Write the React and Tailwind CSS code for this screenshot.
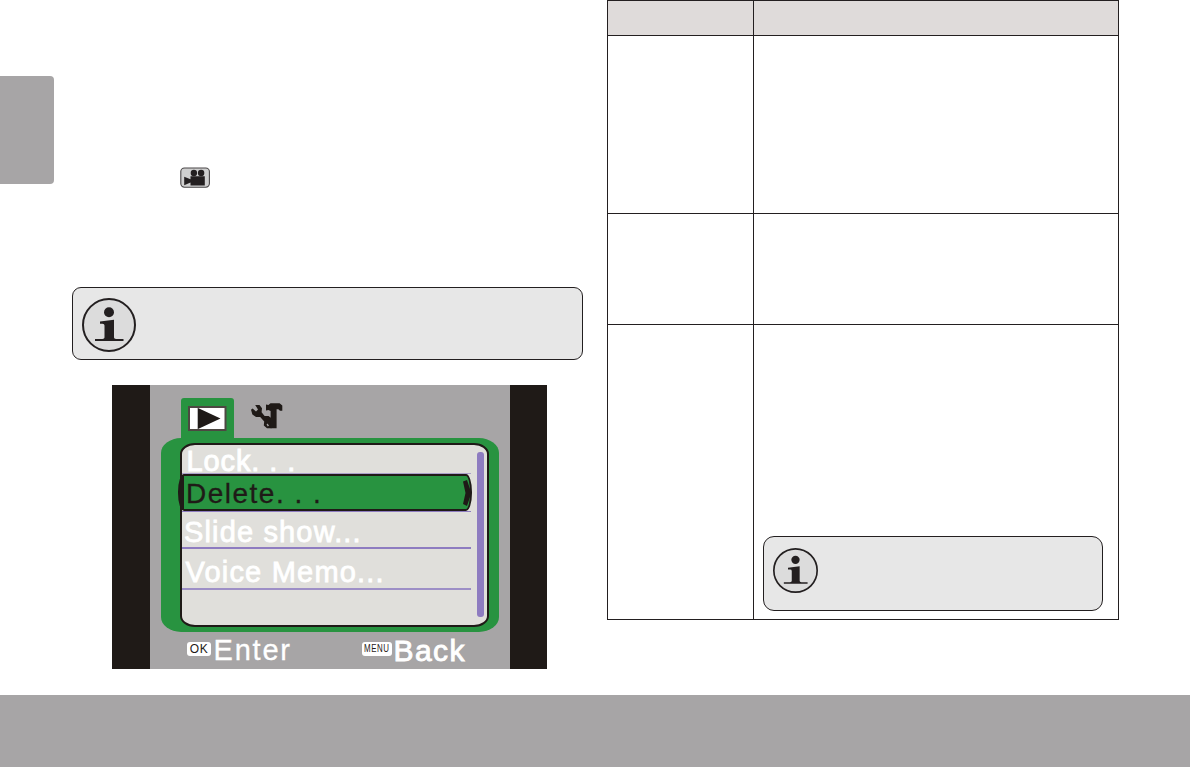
import clsx from 'clsx';

const tableRows = [
  { key: 'header', className: 'h-[35px] bg-[#dfdbda]' },
  { key: 'first', className: 'h-[178px]' },
  { key: 'second', className: 'h-[111px]' },
  { key: 'third', className: 'h-[295px]', note: true },
];

function InfoIcon({ className }) {
  return (
    <svg viewBox="0 0 54 54" className={clsx('shrink-0', className)}>
      <circle cx="27" cy="27" r="26" fill="#dcdcdc" stroke="#231f20" strokeWidth="2" />
      <circle cx="27" cy="14.2" r="5" fill="#231f20" />
      <path d="M18 23.6 L32 21.8 V39.6 Q32 41 34 41 H41.5 V43 H13 V41 H20.5 Q22.5 41 22.5 39.6 V27.5 Q22.5 25.8 20.5 25.8 H18 Z" fill="#231f20" />
    </svg>
  );
}

function CameraIcon() {
  return (
    <svg viewBox="0 0 30 21" className="h-[21px] w-[30px]">
      <rect x="0.8" y="1" width="28.6" height="19.2" rx="3.6" fill="#cfcfcf" stroke="#4a4748" strokeWidth="1.1" />
      <circle cx="13.9" cy="6" r="3.2" fill="#231f20" />
      <circle cx="21.1" cy="6" r="3.2" fill="#231f20" />
      <path d="M4.2 9.8 L10.5 12.2 V9.2 H24.8 V18.4 H10.5 V15.4 L4.2 18.2 Z" fill="#231f20" />
    </svg>
  );
}

function PlayIcon() {
  return (
    <svg viewBox="0 0 39 25" className="h-[25px] w-[39px]">
      <rect x="1" y="1" width="36.5" height="23" fill="#fff" stroke="#4d4842" strokeWidth="2" />
      <path d="M9.5 2 V23" stroke="#bbb" strokeWidth="1" />
      <path d="M10 2 L32.5 12.5 L10 23 Z" fill="#1f1a17" />
    </svg>
  );
}

function ToolsIcon() {
  return (
    <svg viewBox="0 0 32 26" className="h-[26px] w-[32px]" fill="#1f1a17">
      {/* wrench */}
      <path d="M4.2 2 L8.5 2 L11 5.2 L10.6 9.2 L13.6 13 H17.6 L20.5 15.2 V25.2 H16 L12.8 22.4 L13.2 18.6 L9.2 14 H5 L1.4 11.4 L0 6.8 L1.6 5.4 L5 8.6 L7 6.6 Z" />
      <path d="M16.4 20.6 L18 22.4 L16.8 23.4 L15.6 21.6 Z" fill="#a7a5a6" />
      {/* hammer */}
      <path d="M15 1.6 L17.4 2 L19.5 0.2 H28.6 L31.3 2.6 V7.8 H29 L27.4 6.2 H25.6 V25.2 H19.6 V8 L17.4 7 L15 7.6 Z" />
    </svg>
  );
}

function MenuText({ children, className }) {
  return (
    <span className={clsx("block whitespace-pre font-['Liberation_Sans',Arial,sans-serif] leading-8", className)}>
      {children}
    </span>
  );
}

function CameraScreen() {
  return (
    <div className="ml-[39.5px] mt-[25px] flex h-[284px] w-[435.5px] bg-[#a7a5a6]">
      <div className="w-[38.5px] shrink-0 bg-[#1f1a17]" />
      <div className="w-[359.5px] shrink-0 pl-[11px] pt-[13px]">
        {/* Tabs */}
        <div className="flex h-10">
          <div className="ml-5 h-[41px] w-[52.5px] rounded-t-[3px] bg-[#289340] pl-[7px] pt-[8px]">
            <PlayIcon />
          </div>
          <div className="ml-[17px] pt-[5px]">
            <ToolsIcon />
          </div>
        </div>

        {/* Menu */}
        <div className="h-[193.5px] w-[338px] rounded-[20px/15px] bg-[#289340] pl-[19px] pt-[5px]">
          <div className="flex h-[184px] w-[309px] rounded-[15px/11px] border-2 border-[#1f1a17] bg-[#e0dfdb]">
            <div className="w-[289px] shrink-0">
              <div className="h-[29px] border-b border-[#aaa0c9]">
                <MenuText className="pl-[4.5px] text-[29px] tracking-[0.9px] text-white [-webkit-text-stroke:0.9px_white]">Lock. . .</MenuText>
              </div>
              <div className="-ml-[4px] flex h-[37px] w-[294px] items-start justify-between rounded-[6px/18px] border-2 border-[#1f1a17] bg-[#289340]">
                <div className="flex h-full">
                  <div className="mr-[2px] w-[4px] bg-[#1f1a17]" />
                  <MenuText className="pt-[2px] text-[28px] tracking-[1.5px] text-[#1f1a17] [-webkit-text-stroke:0.3px_#1f1a17]">Delete. . .</MenuText>
                </div>
                <svg viewBox="0 0 7 26" className="mt-[4px] h-[26px] w-[7px]">
                  <path d="M0 1.5 L4 0 L7 9 V17 L4 26 L0 24 L2.5 13 Z" fill="#1f1a17" />
                </svg>
              </div>
              <div className="h-[38px] border-y border-t-[#8e7cc0] border-b-[2px] border-b-[#8e7cc0]">
                <MenuText className="pl-[2px] pt-[4px] text-[29px] tracking-[1.15px] text-white [-webkit-text-stroke:0.8px_white]">Slide show...</MenuText>
              </div>
              <div className="h-[41px] border-b-[2px] border-[#9d8fc6]">
                <MenuText className="pl-[3.5px] pt-[7px] text-[29px] tracking-[1.2px] text-white [-webkit-text-stroke:0.8px_white]">Voice Memo...</MenuText>
              </div>
            </div>
            <div className="ml-[6px] mt-[7px] h-[165px] w-[7px] rounded-[3px] bg-[#8e7cc0]" />
          </div>
        </div>

        {/* Button hints */}
        <div className="flex h-[36px] pl-[26px] pt-[1px] text-white">
          <span className="mt-[9px] flex h-[14px] w-[24px] items-center justify-center rounded-[3px] bg-white font-['Liberation_Sans',Arial,sans-serif] text-[12px] tracking-[0.5px] text-[#1f1a17]">
            OK
          </span>
          <MenuText className="w-[151px] pl-[2.5px] pt-[1.5px] text-[29px] tracking-[1.8px] [-webkit-text-stroke:0.3px_white]">Enter</MenuText>
          <span className="mt-[9px] flex h-[14px] w-[30px] items-center justify-center rounded-[3px] bg-white font-['Liberation_Sans',Arial,sans-serif] text-[#1f1a17]">
            <span className="inline-block scale-x-[0.72] text-[11px] tracking-[0.8px]">MENU</span>
          </span>
          <MenuText className="pl-[1.5px] pt-[2px] text-[30px] tracking-[1.4px] [-webkit-text-stroke:0.9px_white]">Back</MenuText>
        </div>
      </div>
      <div className="grow bg-[#1f1a17]" />
    </div>
  );
}

export default function App() {
  return (
    <div className="h-[767px] w-[1191px] overflow-hidden bg-white">
      <div className="flex h-[695px]">
        <aside className="w-[72px] shrink-0 pt-[76px]">
          <div className="h-[108px] w-[54px] rounded-r-[4px] bg-[#a7a5a6]" />
        </aside>

        <section className="w-[535px] shrink-0">
          <div className="h-[287px] pl-[108px] pt-[167px]">
            <CameraIcon />
          </div>
          <div className="flex h-[73px] w-[511px] rounded-[9px] border border-[#231f20] bg-[#e7e7e7] pl-[9px] pt-[10px]">
            <InfoIcon className="h-[54px] w-[54px]" />
          </div>
          <CameraScreen />
        </section>

        <section className="h-[620px] w-[512px] shrink-0 border-l border-t border-[#231f20]">
          {tableRows.map(({ key, className, note }) => (
            <div key={key} className={clsx('flex border-b border-[#231f20]', className)}>
              <div className="w-[146px] shrink-0 border-r border-[#231f20]" />
              <div className="grow border-r border-[#231f20]">
                {note && (
                  <div className="ml-[9px] mt-[211px] flex h-[75px] w-[340px] rounded-[11px] border border-[#231f20] bg-[#e7e7e7] pl-[9px] pt-[11px]">
                    <InfoIcon className="h-[45px] w-[45px]" />
                  </div>
                )}
              </div>
            </div>
          ))}
        </section>
      </div>

      <footer className="h-[72px] w-[1190px] bg-[#a7a5a6]" />
    </div>
  );
}
